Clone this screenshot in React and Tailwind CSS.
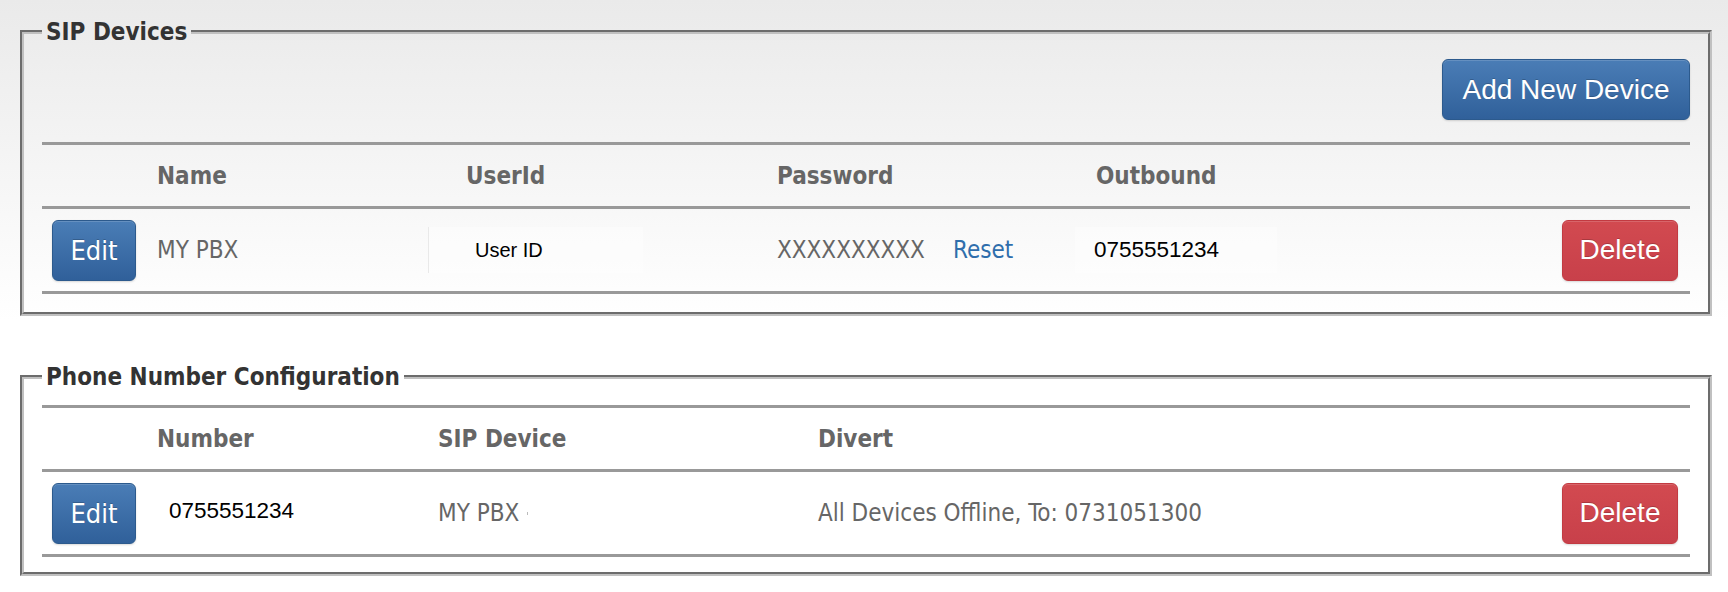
const tah = "font-['DejaVu_Sans_Condensed','DejaVu_Sans',sans-serif]";
const helv = "font-['Liberation_Sans',Arial,sans-serif]";

function PrimaryBtn({ children, className = "" }) {
  return (
    <button
      className={`h-[61px] rounded-[6px] border border-[#2c5a8d] bg-[linear-gradient(to_bottom,#4a7db6,#30609a)] text-white shadow-[inset_0_1px_0_rgba(255,255,255,0.15),0_1px_2px_rgba(0,0,0,0.15)] [text-shadow:0_-1px_0_rgba(0,0,0,0.2)] ${className}`}
    >
      {children}
    </button>
  );
}

function DangerBtn({ className = "" }) {
  return (
    <button
      className={`h-[61px] w-[116px] rounded-[6px] border border-[#c23a41] bg-[linear-gradient(to_bottom,#d24a50,#c8404a)] text-[28px] leading-none text-white shadow-[inset_0_1px_0_rgba(255,255,255,0.15),0_1px_2px_rgba(0,0,0,0.15)] [text-shadow:0_-1px_0_rgba(0,0,0,0.2)] ${helv} ${className}`}
    >
      Delete
    </button>
  );
}

function EditBtn() {
  return (
    <PrimaryBtn className={`ml-[10px] w-[84px] text-[27px] leading-none ${tah}`}>Edit</PrimaryBtn>
  );
}

export default function App() {
  return (
    <div className="min-h-[592px] w-full bg-[linear-gradient(to_bottom,#eaeaea_0px,#ffffff_320px)] pl-[20px] pt-[17px] pb-[16px]">
      {/* SIP Devices */}
      <fieldset className="w-[1692px] border-4 border-[#c0c0c0] [border-style:groove] px-[18px] pt-[12px] pb-[18px]">
        <legend className={`px-1 text-[24px] font-bold leading-[30px] text-[#333] ${tah}`}>SIP Devices</legend>
        <div className="flex justify-end">
          <PrimaryBtn className={`w-[248px] text-[28px] leading-none ${helv}`}>Add New Device</PrimaryBtn>
        </div>
        <div className="mt-[22px] border-t-[3px] border-[#999]">
          <div className={`flex h-[61px] items-center text-[24px] font-bold text-[#666] ${tah}`}>
            <div className="w-[115px]" />
            <div className="w-[309px]">Name</div>
            <div className="w-[311px]">UserId</div>
            <div className="w-[319px]">Password</div>
            <div>Outbound</div>
          </div>
          <div className="flex h-[88px] items-center border-t-[3px] border-b-[3px] border-[#999]">
            <div className="w-[115px]">
              <EditBtn />
            </div>
            <div className={`w-[271px] text-[24px] text-[#666] ${tah}`}>MY PBX</div>
            <div className="flex h-[46px] w-[215px] items-center border-l border-[#e9e9e9] bg-white/40 pl-[46px]">
              <span className={`text-[20px] text-black ${helv}`}>User ID</span>
            </div>
            <div className="w-[134px]" />
            <div className={`w-[176px] text-[24px] text-[#666] ${tah}`}>XXXXXXXXXX</div>
            <div className={`w-[122px] text-[24px] text-[#2f6eac] ${tah}`}>Reset</div>
            <div className="flex h-[46px] w-[202px] items-center bg-white/40 pl-[19px]">
              <span className={`text-[22.5px] text-black ${helv}`}>0755551234</span>
            </div>
            <div className="flex flex-1 justify-end pr-[12px]">
              <DangerBtn />
            </div>
          </div>
        </div>
      </fieldset>

      {/* Phone Number Configuration */}
      <fieldset className="mt-[46px] w-[1692px] border-4 border-[#c0c0c0] [border-style:groove] px-[18px] pt-[13px] pb-[15px]">
        <legend className={`px-1 text-[24px] font-bold leading-[30px] text-[#333] ${tah}`}>Phone Number Configuration</legend>
        <div className="border-t-[3px] border-[#999]">
          <div className={`flex h-[61px] items-center text-[24px] font-bold text-[#666] ${tah}`}>
            <div className="w-[115px]" />
            <div className="w-[281px]">Number</div>
            <div className="w-[380px]">SIP Device</div>
            <div>Divert</div>
          </div>
          <div className="flex h-[88px] items-center border-t-[3px] border-b-[3px] border-[#999]">
            <div className="w-[115px]">
              <EditBtn />
            </div>
            <div className="w-[281px] pb-[4px] pl-[12px]">
              <span className={`text-[22.5px] text-black ${helv}`}>0755551234</span>
            </div>
            <div className={`flex w-[380px] items-center text-[24px] text-[#666] ${tah}`}>
              <span>MY PBX</span>
              <span className="ml-[8px] inline-block h-[3px] w-[1px] bg-[#bbb]" />
            </div>
            <div className={`text-[24px] text-[#666] ${tah}`}>All Devices Offline, To: 0731051300</div>
            <div className="flex flex-1 justify-end pr-[12px]">
              <DangerBtn />
            </div>
          </div>
        </div>
      </fieldset>
    </div>
  );
}
